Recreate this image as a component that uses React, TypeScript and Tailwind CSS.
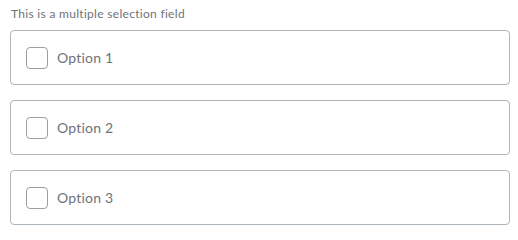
export default function App() {
  const opts = ["Option 1", "Option 2", "Option 3"];
  return (
    <div className="w-[518px] h-[232px] bg-white font-['Lato',sans-serif]">
      <div className="pl-[11px] pt-[6px] h-[30px] text-[12px] leading-[16px] tracking-[0.3px] text-[#6e7379]">
        This is a multiple selection field
      </div>
      <div className="flex flex-col gap-[15px] pl-[10px]">
        {opts.map((o) => (
          <label
            key={o}
            className="flex items-center w-[500px] h-[55px] border border-[#aeb6bd] rounded-[4px] px-[15px]"
          >
            <span className="w-[22px] h-[22px] border border-[#9a9fa4] rounded-[4px] bg-white" />
            <span className="ml-[9px] text-[14px] tracking-[0.2px] text-[#6e7379]">{o}</span>
          </label>
        ))}
      </div>
    </div>
  );
}
